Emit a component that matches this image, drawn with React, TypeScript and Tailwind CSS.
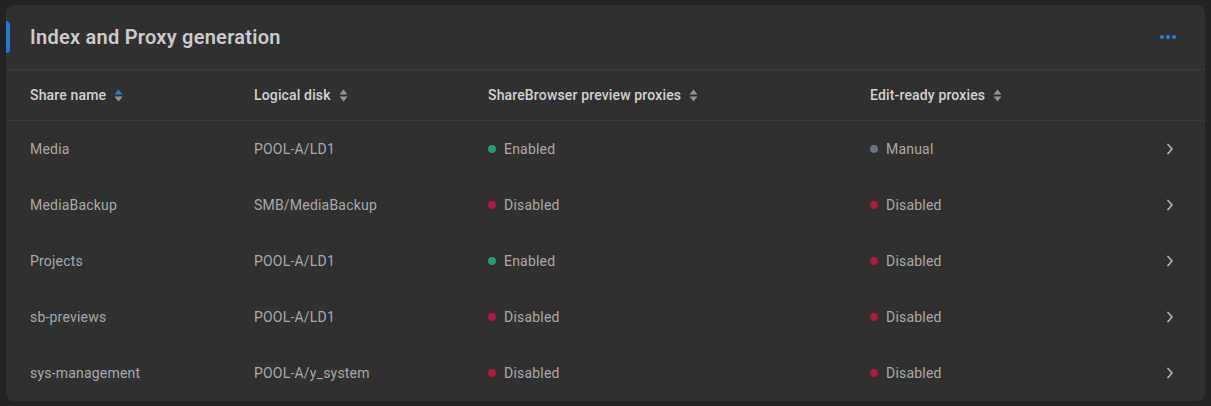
type Status = "Enabled" | "Disabled" | "Manual";

const rows: { name: string; disk: string; preview: Status; edit: Status }[] = [
  { name: "Media", disk: "POOL-A/LD1", preview: "Enabled", edit: "Manual" },
  { name: "MediaBackup", disk: "SMB/MediaBackup", preview: "Disabled", edit: "Disabled" },
  { name: "Projects", disk: "POOL-A/LD1", preview: "Enabled", edit: "Disabled" },
  { name: "sb-previews", disk: "POOL-A/LD1", preview: "Disabled", edit: "Disabled" },
  { name: "sys-management", disk: "POOL-A/y_system", preview: "Disabled", edit: "Disabled" },
];

const dotColor: Record<Status, string> = {
  Enabled: "bg-[#1f9e6a]",
  Disabled: "bg-[#b3173e]",
  Manual: "bg-[#66737e]",
};

function SortIcon({ active }: { active?: boolean }) {
  return (
    <svg width="9" height="13" viewBox="0 0 9 13" className="ml-2 shrink-0">
      <path d="M4.5 0.5 L8.5 5.5 H0.5 Z" fill={active ? "#2a7fd8" : "#8c96a0"} />
      <path d="M4.5 12.5 L8.5 7.5 H0.5 Z" fill="#8c96a0" />
    </svg>
  );
}

function StatusCell({ value }: { value: Status }) {
  return (
    <div className="flex items-center gap-2">
      <span className={`w-[8px] h-[8px] rounded-full ${dotColor[value]}`} />
      <span>{value}</span>
    </div>
  );
}

function Chevron() {
  return (
    <svg width="8" height="12" viewBox="0 0 8 12">
      <path d="M2 1.5 L6 6 L2 10.5" stroke="#a8b0b8" strokeWidth="1.8" fill="none" strokeLinecap="round" strokeLinejoin="round" />
    </svg>
  );
}

const cols = "grid grid-cols-[224px_234px_382px_1fr_40px] items-center";

export default function App() {
  return (
    <div
      className="min-h-screen w-full bg-[#232323] pt-[5px] px-[6px] pb-[5px]"
      style={{ fontFamily: "Roboto, 'Noto Sans', sans-serif" }}
    >
      <div className="relative bg-[#303030] rounded-lg overflow-hidden">
        {/* Header */}
        <div className="relative h-[65px] flex items-center justify-between pl-6 pr-[29px] border-b border-[#3a3a3a]">
          <span className="absolute left-0 top-4 w-1 h-8 rounded-r bg-[#1f7ad8]" />
          <h2 className="text-[20px] font-semibold text-[#cbcbcb] tracking-[0.25px]">Index and Proxy generation</h2>
          <div className="flex items-center gap-[2px]">
            <span className="w-[4px] h-[4px] rounded-full bg-[#2a7fd8]" />
            <span className="w-[4px] h-[4px] rounded-full bg-[#2a7fd8]" />
            <span className="w-[4px] h-[4px] rounded-full bg-[#2a7fd8]" />
          </div>
        </div>

        {/* Column headers */}
        <div className={`${cols} h-[51px] pl-6 border-b border-[#3a3a3a] text-[14px] font-medium text-[#d2d2d2] tracking-[0.15px]`}>
          <div className="flex items-center">Share name<SortIcon active /></div>
          <div className="flex items-center">Logical disk<SortIcon /></div>
          <div className="flex items-center">ShareBrowser preview proxies<SortIcon /></div>
          <div className="flex items-center">Edit-ready proxies<SortIcon /></div>
          <div />
        </div>

        {/* Rows */}
        {rows.map((r) => (
          <div key={r.name} className={`${cols} h-14 pl-6 text-[14px] text-[#a9a9a9] tracking-[0.2px]`}>
            <div>{r.name}</div>
            <div>{r.disk}</div>
            <StatusCell value={r.preview} />
            <StatusCell value={r.edit} />
            <div className="flex justify-start pl-[1px]">
              <Chevron />
            </div>
          </div>
        ))}
      </div>
    </div>
  );
}
